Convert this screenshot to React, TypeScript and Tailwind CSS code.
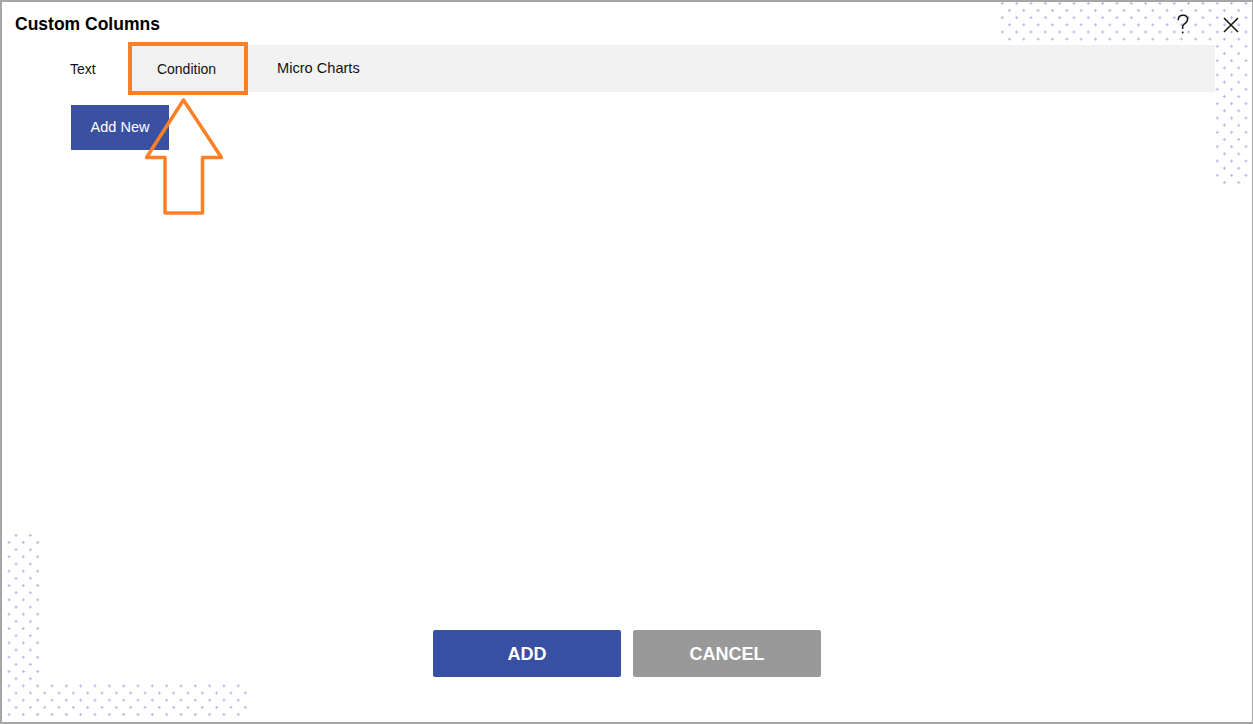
import React from "react";

type Dot = { x: number; y: number };

// plus-shaped dot decoration, page coordinates
function buildDots(): Dot[] {
  const dots: Dot[] = [];
  const step = 14.33;
  const row = 7.17;

  // top right corner
  for (let k = 0; k < 27; k++) {
    const y = 3.3 + row * k;
    const start = 1002.3 + (k % 2 ? 7.17 : 0);
    for (let n = 0; n < 18; n++) {
      const x = start + step * n;
      if (x > 1250) continue;
      if ((y < 41) || (x >= 1214 && y <= 186)) dots.push({ x, y });
    }
  }

  // bottom left corner
  for (let k = 0; k < 27; k++) {
    const y = 535.3 + row * k;
    if (y > 720) continue;
    const start = k % 2 ? 9 : 1.7;
    for (let n = 0; n < 18; n++) {
      const x = start + step * n;
      if (x < 3) continue;
      if ((x <= 40) || (y >= 683 && x <= 248)) dots.push({ x, y });
    }
  }
  return dots;
}

const dots = buildDots();

function DotDecor() {
  return (
    <svg
      className="absolute left-[-2px] top-[-2px] pointer-events-none"
      width={1253}
      height={724}
      viewBox="0 0 1253 724"
    >
      {dots.map((d, i) => (
        <g key={i} fill="#b0bae6">
          <rect x={d.x - 1.5} y={d.y - 0.5} width={3} height={1} />
          <rect x={d.x - 0.5} y={d.y - 1.5} width={1} height={3} />
        </g>
      ))}
    </svg>
  );
}

function HelpIcon() {
  return (
    <svg width="14" height="22" viewBox="0 0 14 22" fill="none" stroke="#111" strokeWidth="1.5">
      <path d="M2.2 6.2 C2.2 2.6 4.6 1.2 7 1.2 C9.6 1.2 11.6 2.8 11.6 5.4 C11.6 8 9.4 9 7.9 10.3 C6.8 11.3 6.6 12.2 6.6 13.6 L6.6 15" />
      <rect x="5.8" y="17.6" width="1.7" height="1.8" fill="#111" stroke="none" />
    </svg>
  );
}

function CloseIcon() {
  return (
    <svg width="16" height="16" viewBox="0 0 16 16" stroke="#111" strokeWidth="1.5">
      <path d="M1 1 L15 15 M15 1 L1 15" />
    </svg>
  );
}

function ArrowMark() {
  return (
    <svg
      className="absolute left-[-2px] top-[-2px] pointer-events-none"
      width={1253}
      height={724}
      viewBox="0 0 1253 724"
    >
      <polygon
        points="183.5,100 146.5,157.5 165,157.5 165,213 202.5,213 202.5,157.5 221.5,157.5"
        fill="none"
        stroke="#fd8026"
        strokeWidth="3.5"
        strokeLinejoin="round"
      />
    </svg>
  );
}

const App: React.FC = () => {
  return (
    <div className="w-[1253px] h-[724px] bg-[#a6a6a6] pt-[2px] pl-[2px] pr-[1px] pb-[2px] font-['Liberation_Sans',Arial,sans-serif] overflow-hidden">
      <div className="relative w-full h-full bg-white flex flex-col">
        <DotDecor />

        <div className="relative h-[43px] flex items-center pl-[13px] pr-[13px]">
          <h1 className="text-[17.5px] font-bold text-black mt-[2px]">Custom Columns</h1>
          <div className="ml-auto flex items-center gap-[33px] mt-[2px]">
            <HelpIcon />
            <CloseIcon />
          </div>
        </div>

        <div className="relative ml-[43px] w-[1170px] h-[47px] bg-[#f2f2f2] flex text-[14px] text-[#111]">
          <div className="w-[83px] bg-white flex items-center pl-[25px] pt-[1px]">Text</div>
          <div className="relative w-[120px] flex items-center justify-center pr-[3px] pt-[1px]">
            Condition
            <div className="absolute left-0 right-0 top-[-3px] bottom-[-3px] border-[4px] border-[#fd8026]" />
          </div>
          <div className="flex items-center pl-[29px] pt-[1px] text-[14.6px]">Micro Charts</div>
        </div>

        <div className="relative pl-[69px] pt-[13px]">
          <button className="w-[98px] h-[45px] bg-[#3a50a1] text-white text-[14.5px]">Add New</button>
        </div>

        <ArrowMark />

        <div className="flex-1" />

        <div className="relative flex justify-center gap-[12px] pb-[45px]">
          <button className="w-[188px] h-[47px] rounded-[2px] bg-[#3850a1] text-white text-[18px] font-bold pt-[1px]">ADD</button>
          <button className="w-[188px] h-[47px] rounded-[2px] bg-[#999999] text-white text-[18px] font-bold pt-[1px]">CANCEL</button>
        </div>
      </div>
    </div>
  );
};

export default App;
